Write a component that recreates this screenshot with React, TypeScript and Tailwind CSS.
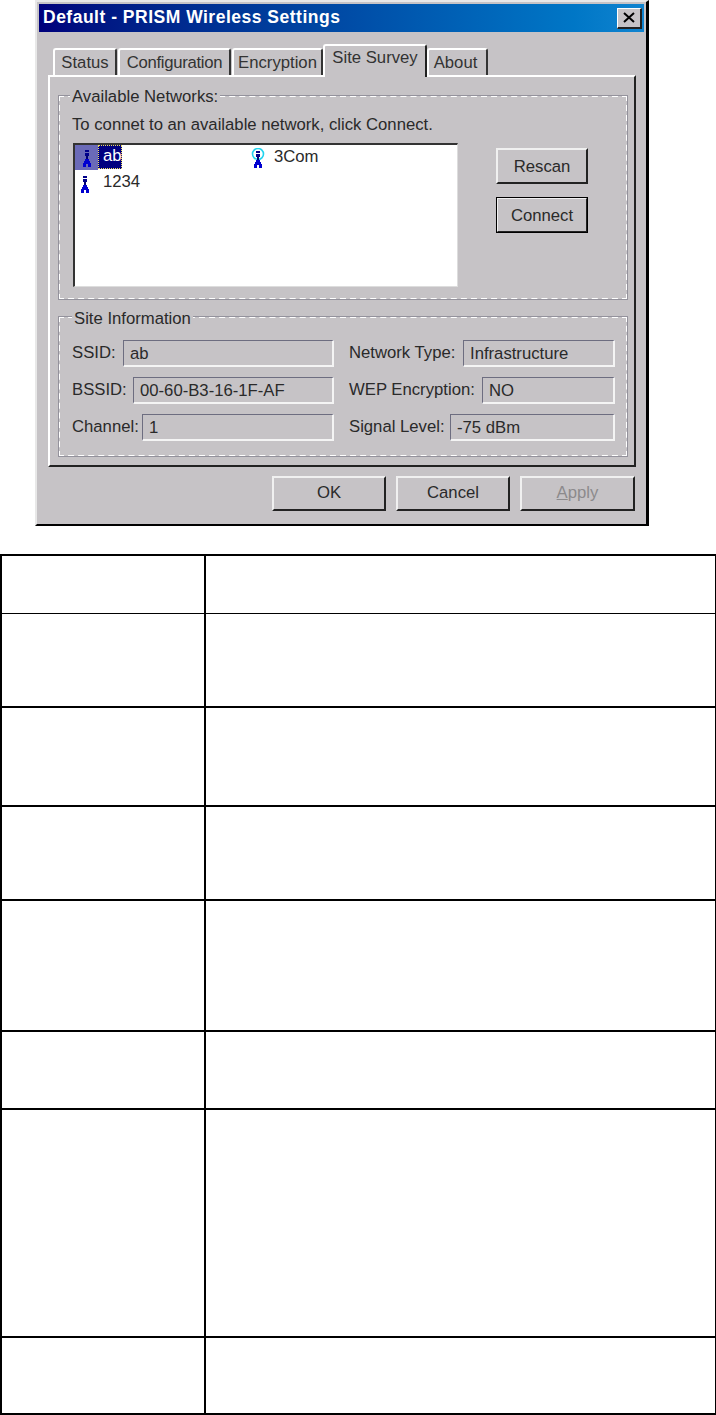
import React from "react";

function Tower({ beacon }: { beacon?: boolean }) {
  return (
    <svg width="16" height="20" viewBox="0 0 16 20" className="shrink-0">
      {beacon && <circle cx="8" cy="6" r="5.5" fill="none" stroke="#22d3ee" strokeWidth="1.6" />}
      <rect x="6" y="3" width="4" height="2" fill="#00008a" />
      <rect x="6" y="6" width="4" height="3" fill="#00008a" />
      <rect x="7" y="9" width="2" height="3" fill="#000070" />
      <path d="M6 12h4v2h1v2h1v4H9v-3H7v3H4v-4h1v-2h1z" fill="#0000d0" />
    </svg>
  );
}

function Tab({ label, active, width }: { label: string; active?: boolean; width: string }) {
  return (
    <div
      className={
        (active
          ? "relative z-10 h-[33px] -mb-[2px] pt-[4px] bg-[#c6c3c6] border-t-2 border-l-2 border-white border-r-2 border-r-[#222] rounded-t-[3px] text-center "
          : "h-[27px] pt-[5px] bg-[#c6c3c6] border-t-2 border-l-2 border-white border-r-2 border-r-[#333] rounded-t-[3px] text-center ") + width
      }
    >
      {label}
    </div>
  );
}

function Btn({ children, className, disabled, focused }: { children: React.ReactNode; className: string; disabled?: boolean; focused?: boolean }) {
  return (
    <div
      className={
        "flex items-center justify-center border-t-2 border-l-2 border-t-[#f0f0f0] border-l-[#f0f0f0] border-b-2 border-r-2 border-b-[#222] border-r-[#222] " +
        (focused ? "outline outline-1 -outline-offset-1 outline-black " : "") +
        (disabled ? "text-[#8c8a8c] " : "") +
        className
      }
    >
      {children}
    </div>
  );
}

function Field({ label, value, width }: { label: string; value: string; width: string }) {
  return (
    <div className="flex items-start justify-between h-[27px]">
      <span className="whitespace-nowrap mt-[5px]">{label}</span>
      <div className={"h-[27px] pl-[6px] pt-[2px] flex items-center border-t border-l border-[#6d6d80] border-b-2 border-r-2 border-b-[#f4f4f4] border-r-[#f4f4f4] " + width}>
        {value}
      </div>
    </div>
  );
}

const rows = [
  "h-[58px] border-b-[1px]",
  "h-[94px] border-b-2",
  "h-[99px] border-b-2",
  "h-[94px] border-b-2",
  "h-[131px] border-b-2",
  "h-[78px] border-b-2",
  "h-[228px] border-b-2",
  "h-[75px]",
];

export default function App() {
  return (
    <div className="w-[716px] h-[1415px] bg-white overflow-hidden font-['Liberation_Sans',Arial,sans-serif] text-[16.7px] leading-none text-[#2a2a2a]">
      <div className="ml-[35px] w-[614px] h-[526px] bg-[#c6c3c6] border-t-2 border-l-2 border-t-[#e8e8e8] border-l-[#e8e8e8] border-r-3 border-b-2 border-r-black border-b-black pt-[2px] pl-[2px] pr-[2px]">
        <div className="h-[28px] flex items-center justify-between pl-[4px] pr-[2px] bg-gradient-to-r from-[#00007b] to-[#1084d0] text-white font-bold text-[17.5px] tracking-[0.5px]">
          <span>Default - PRISM Wireless Settings</span>
          <div className="w-[25px] h-[21px] flex items-center justify-center bg-[#c6c3c6] border-t border-l border-white border-b-2 border-r-2 border-b-[#222] border-r-[#222]">
            <svg width="12" height="11" viewBox="0 0 12 11"><path d="M1 1l10 9M11 1L1 10" stroke="#000" strokeWidth="2" /></svg>
          </div>
        </div>

        <div className="flex items-end h-[43px] pl-[14px] text-[#333]">
          <Tab label="Status" width="w-[64px] mr-[1px]" />
          <Tab label="Configuration" width="w-[113px] mr-[1px] tracking-[-0.3px]" />
          <Tab label="Encryption" width="w-[91px]" />
          <Tab label="Site Survey" active width="w-[104px]" />
          <Tab label="About" width="w-[61px] pr-[4px]" />
        </div>

        <div className="ml-[9px] w-[588px] h-[392px] border-t-2 border-l-2 border-white border-r-2 border-b-2 border-r-[#222] border-b-[#222] pl-[8px] pr-[6px] pt-[18px]">
          <div className="relative h-[205px] border-2 border-dashed border-white outline outline-1 -outline-offset-1 outline-[#94929c] pl-[12px] pt-[20px]">
            <span className="absolute -top-[8px] left-[10px] bg-[#c6c3c6] px-[2px]">Available Networks:</span>
            <div>To connet to an available network, click Connect.</div>
            <div className="flex mt-[9px] ml-[1px] gap-[38px]">
              <div className="w-[385px] h-[144px] bg-white border-t-2 border-l-2 border-t-[#333] border-l-[#333] border-r border-b border-[#ddd] shrink-0 grid grid-cols-[175px_1fr] grid-rows-[25px_25px]">
                <div className="flex items-start">
                  <div className="w-[23px] h-[25px] bg-[#6a6ab8] flex items-center justify-center"><Tower /></div>
                  <div className="h-[24px] w-[24px] pl-[4px] flex items-center bg-[#000080] text-white border border-dotted border-[#f0e060]">ab</div>
                </div>
                <div className="flex items-start gap-[8px] pt-[3px]">
                  <Tower beacon />
                  <span className="pt-[1px]">3Com</span>
                </div>
                <div className="flex items-start gap-[10px] pl-[2px] pt-[3px]">
                  <Tower />
                  <span className="pt-[1px]">1234</span>
                </div>
              </div>
              <div className="flex flex-col gap-[13px] mt-[5px]">
                <Btn className="w-[92px] h-[36px] pt-[3px]">Rescan</Btn>
                <Btn className="w-[92px] h-[36px] pt-[3px]" focused>Connect</Btn>
              </div>
            </div>
          </div>

          <div className="relative mt-[16px] h-[141px] border-2 border-dashed border-white outline outline-1 -outline-offset-1 outline-[#94929c] pl-[12px] pt-[22px]">
            <span className="absolute -top-[7px] left-[12px] bg-[#c6c3c6] px-[2px]">Site Information</span>
            <div className="grid grid-cols-[262px_266px] gap-x-[15px] gap-y-[10px]">
              <Field label="SSID:" value="ab" width="w-[211px]" />
              <Field label="Network Type:" value="Infrastructure" width="w-[152px]" />
              <Field label="BSSID:" value="00-60-B3-16-1F-AF" width="w-[201px]" />
              <Field label="WEP Encryption:" value="NO" width="w-[133px]" />
              <Field label="Channel:" value="1" width="w-[192px]" />
              <Field label="Signal Level:" value="-75 dBm" width="w-[165px]" />
            </div>
          </div>
        </div>

        <div className="flex justify-end gap-[10px] pr-[9px] pt-[9px]">
          <Btn className="w-[114px] h-[35px]">OK</Btn>
          <Btn className="w-[114px] h-[35px]">Cancel</Btn>
          <Btn className="w-[115px] h-[35px]" disabled><span><span className="underline">A</span>pply</span></Btn>
        </div>
      </div>

      <div className="mt-[28px] w-[716px] h-[861px] border-t-2 border-l-2 border-r border-b-2 border-black">
        {rows.map((r, i) => (
          <div key={i} className={"grid grid-cols-[204px_1fr] border-black " + r}>
            <div className="border-r-2 border-black" />
            <div />
          </div>
        ))}
      </div>
    </div>
  );
}
